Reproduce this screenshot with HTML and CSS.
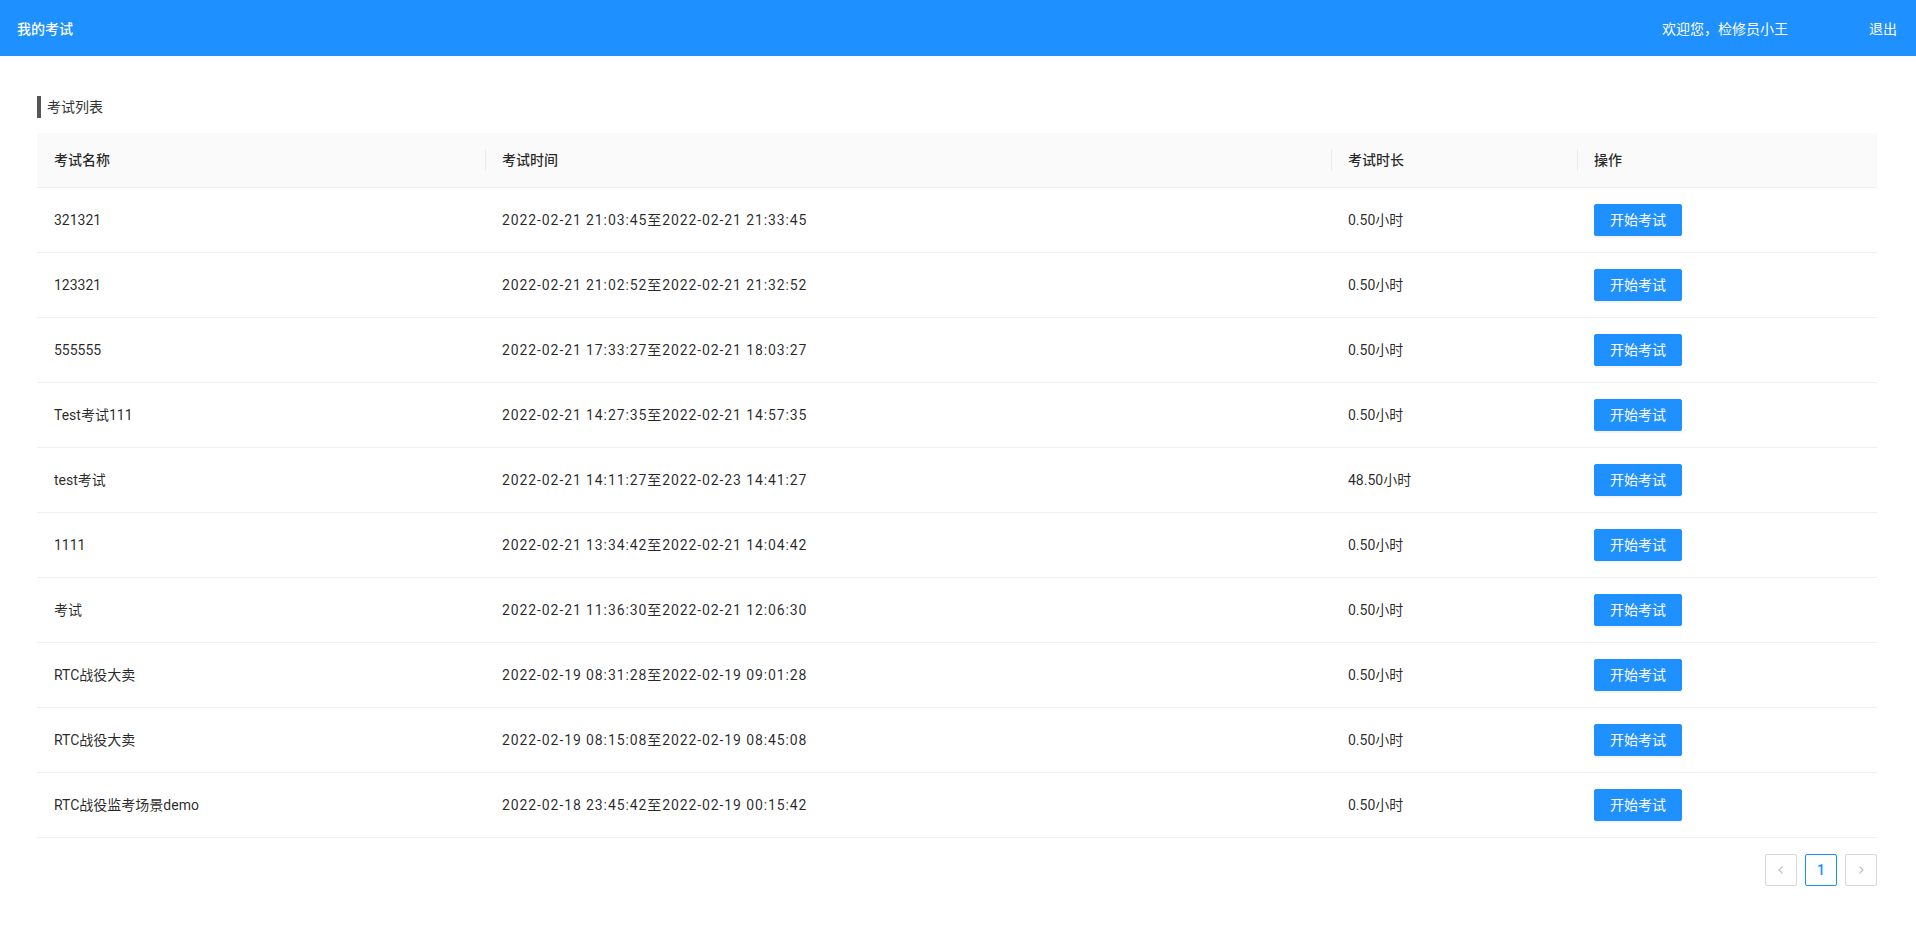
FILE: index.html
```html
<!DOCTYPE html>
<html lang="zh-CN">
<head>
<meta charset="utf-8">
<title>我的考试</title>
<link rel="stylesheet" href="styles.css">
</head>
<body>
<header class="topbar">
  <div class="brand">我的考试</div>
  <div class="user">
    <span class="welcome">欢迎您，检修员小王</span>
    <a class="logout">退出</a>
  </div>
</header>
<main class="content">
  <h2 class="section-title">考试列表</h2>
  <table class="exam-table">
    <colgroup>
      <col class="c-name"><col class="c-time"><col class="c-dur"><col class="c-op">
    </colgroup>
    <thead>
      <tr><th>考试名称</th><th class="sep">考试时间</th><th class="sep">考试时长</th><th class="sep">操作</th></tr>
    </thead>
    <tbody>
      <tr><td>321321</td><td class="time">2022-02-21 21:03:45至2022-02-21 21:33:45</td><td>0.50小时</td><td><button class="btn">开始考试</button></td></tr>
      <tr><td>123321</td><td class="time">2022-02-21 21:02:52至2022-02-21 21:32:52</td><td>0.50小时</td><td><button class="btn">开始考试</button></td></tr>
      <tr><td>555555</td><td class="time">2022-02-21 17:33:27至2022-02-21 18:03:27</td><td>0.50小时</td><td><button class="btn">开始考试</button></td></tr>
      <tr><td>Test考试111</td><td class="time">2022-02-21 14:27:35至2022-02-21 14:57:35</td><td>0.50小时</td><td><button class="btn">开始考试</button></td></tr>
      <tr><td>test考试</td><td class="time">2022-02-21 14:11:27至2022-02-23 14:41:27</td><td>48.50小时</td><td><button class="btn">开始考试</button></td></tr>
      <tr><td>1111</td><td class="time">2022-02-21 13:34:42至2022-02-21 14:04:42</td><td>0.50小时</td><td><button class="btn">开始考试</button></td></tr>
      <tr><td>考试</td><td class="time">2022-02-21 11:36:30至2022-02-21 12:06:30</td><td>0.50小时</td><td><button class="btn">开始考试</button></td></tr>
      <tr><td>RTC战役大卖</td><td class="time">2022-02-19 08:31:28至2022-02-19 09:01:28</td><td>0.50小时</td><td><button class="btn">开始考试</button></td></tr>
      <tr><td>RTC战役大卖</td><td class="time">2022-02-19 08:15:08至2022-02-19 08:45:08</td><td>0.50小时</td><td><button class="btn">开始考试</button></td></tr>
      <tr><td>RTC战役监考场景demo</td><td class="time">2022-02-18 23:45:42至2022-02-19 00:15:42</td><td>0.50小时</td><td><button class="btn">开始考试</button></td></tr>
    </tbody>
  </table>
  <nav class="pager">
    <span class="page-item disabled"><svg width="10" height="10" viewBox="0 0 10 10"><path d="M6.5 1.5 L3 5 L6.5 8.5" fill="none" stroke="currentColor" stroke-width="1.1"/></svg></span>
    <span class="page-item active">1</span>
    <span class="page-item disabled"><svg width="10" height="10" viewBox="0 0 10 10"><path d="M3.5 1.5 L7 5 L3.5 8.5" fill="none" stroke="currentColor" stroke-width="1.1"/></svg></span>
  </nav>
</main>
</body>
</html>
```

FILE: styles.css
```css
* { box-sizing: border-box; }
html, body {
  margin: 0;
  background: #fff;
  font-family: Roboto, "Noto Sans CJK SC", sans-serif;
  font-size: 14px;
  color: rgba(0, 0, 0, 0.85);
}
.topbar {
  height: 56px;
  background: #1e90ff;
  color: #fff;
  display: flex;
  align-items: center;
  justify-content: space-between;
  padding: 0 19px 0 17px;
}
.brand { font-weight: 500; }
.user { display: flex; align-items: center; gap: 81px; }
.logout { color: #fff; cursor: pointer; }

.content { padding: 40px 39px 0 37px; }
.section-title {
  margin: 0 0 15px;
  font-size: 14px;
  font-weight: 400;
  line-height: 22px;
  color: #333;
  display: flex;
  align-items: center;
}
.section-title::before {
  content: "";
  width: 4px;
  height: 22px;
  background: #555;
  margin-right: 6px;
}

.exam-table {
  width: 100%;
  border-collapse: collapse;
  table-layout: fixed;
}
.c-name { width: 448px; }
.c-time { width: 846px; }
.c-dur { width: 246px; }
.c-op { width: 300px; }
.exam-table th {
  background: #fafafa;
  font-weight: 500;
  text-align: left;
  padding: 16px 17px;
  line-height: 22px;
  border-bottom: 1px solid #f0f0f0;
  position: relative;
}
.exam-table th.sep::before {
  content: "";
  position: absolute;
  left: 0;
  top: 50%;
  width: 1px;
  height: 22px;
  transform: translateY(-50%);
  background: rgba(0, 0, 0, 0.06);
}
.exam-table td {
  padding: 16px 17px;
  line-height: 32px;
  border-bottom: 1px solid #f0f0f0;
  white-space: nowrap;
}
.exam-table td.time { letter-spacing: 0.9px; }
.btn {
  display: block;
  height: 32px;
  padding: 0 15px;
  border: 1px solid #1e90ff;
  background: #1e90ff;
  color: #fff;
  font-family: inherit;
  font-size: 14px;
  line-height: 30px;
  border-radius: 2px;
  box-shadow: 0 2px 0 rgba(0, 0, 0, 0.045);
  cursor: pointer;
}

.pager {
  display: flex;
  justify-content: flex-end;
  gap: 8px;
  margin: 16px 0;
}
.page-item {
  width: 32px;
  height: 32px;
  border: 1px solid #d9d9d9;
  border-radius: 2px;
  display: flex;
  align-items: center;
  justify-content: center;
  color: rgba(0, 0, 0, 0.25);
}
.page-item.active {
  border-color: #1890ff;
  color: #1890ff;
  font-weight: 500;
}
```
